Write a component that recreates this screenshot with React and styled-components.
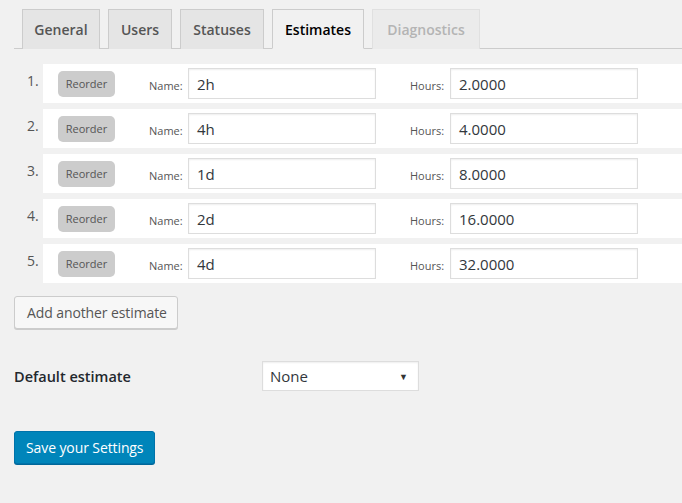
import styled, { createGlobalStyle } from 'styled-components';

const GlobalStyle = createGlobalStyle`
  body {
    margin: 0;
    background: #f1f1f1;
    font-family: "Open Sans", "Noto Sans", sans-serif;
    color: #23282d;
  }
`;

const Page = styled.div`
  padding: 9px 0 40px 14px;
`;

const TabBar = styled.div`
  display: flex;
  gap: 8px;
  padding-left: 8px;
  border-bottom: 1px solid #ccc;
`;

const Tab = styled.div`
  box-sizing: border-box;
  height: 40px;
  width: ${({ w }) => w}px;
  margin-bottom: -1px;
  display: flex;
  align-items: center;
  justify-content: center;
  font-size: 14px;
  font-weight: 600;
  border: 1px solid #ccc;
  border-bottom: none;
  background: ${({ active }) => (active ? '#f1f1f1' : '#e5e5e5')};
  color: ${({ active, disabled }) => (active ? '#000' : disabled ? '#b4b4b4' : '#555')};
  ${({ active }) => active && 'border-bottom: 1px solid #f1f1f1;'}
  ${({ disabled }) => disabled && 'background: #ebebeb; border-color: #e0e0e0;'}
`;

const List = styled.div`
  margin-top: 15px;
  display: flex;
  flex-direction: column;
  gap: 6px;
`;

const Item = styled.div`
  display: flex;
`;

const Num = styled.div`
  width: 16px;
  padding-left: 13px;
  font-size: 14px;
  color: #555;
  line-height: 38px;
  margin-top: -2px;
`;

const Card = styled.div`
  flex: 1;
  height: 39px;
  background: #fff;
  display: flex;
  align-items: center;
  padding-left: 15px;
`;

const Reorder = styled.span`
  box-sizing: border-box;
  width: 57px;
  height: 26px;
  background: #ccc;
  border-radius: 5px;
  font-size: 11px;
  color: #555;
  display: flex;
  align-items: center;
  justify-content: center;
`;

const FieldLabel = styled.span`
  font-size: 11px;
  color: #555;
  margin-left: 34px;
  width: ${({ wide }) => (wide ? 40 : 39)}px;
  padding-top: 3px;
`;

const TextBox = styled.div`
  box-sizing: border-box;
  width: 188px;
  height: 31px;
  border: 1px solid #ddd;
  box-shadow: inset 0 1px 2px rgba(0, 0, 0, 0.07);
  background: #fff;
  font-size: 15px;
  color: #32373c;
  padding-left: 8px;
  display: flex;
  align-items: center;
`;

const SecondaryButton = styled.div`
  box-sizing: border-box;
  display: inline-flex;
  align-items: center;
  margin-top: 13px;
  height: 33px;
  padding: 0 10px 0 12px;
  font-size: 14px;
  letter-spacing: -0.1px;
  color: #555;
  background: #f7f7f7;
  border: 1px solid #ccc;
  border-radius: 3px;
  box-shadow: 0 1px 0 #ccc;
`;

const FormRow = styled.div`
  display: flex;
  align-items: center;
  margin-top: 32px;
`;

const FormLabel = styled.div`
  width: 248px;
  font-size: 14.5px;
  font-weight: 600;
  color: #23282d;
`;

const Select = styled.div`
  box-sizing: border-box;
  width: 157px;
  height: 30px;
  border: 1px solid #ddd;
  box-shadow: inset 0 1px 2px rgba(0, 0, 0, 0.07);
  background: #fff;
  display: flex;
  align-items: center;
  justify-content: space-between;
  padding: 0 10px 0 7px;
  font-size: 15px;
  color: #32373c;
`;

const Arrow = styled.span`
  font-size: 9px;
  color: #333;
`;

const PrimaryButton = styled.div`
  box-sizing: border-box;
  display: inline-flex;
  align-items: center;
  margin-top: 40px;
  height: 33px;
  padding: 0 11px;
  font-size: 14px;
  letter-spacing: -0.1px;
  color: #fff;
  background: #0085ba;
  border: 1px solid #0073aa;
  border-radius: 3px;
  box-shadow: 0 1px 0 #006799;
`;

const tabs = [
  { label: 'General', w: 78 },
  { label: 'Users', w: 64 },
  { label: 'Statuses', w: 84 },
  { label: 'Estimates', w: 92, active: true },
  { label: 'Diagnostics', w: 108, disabled: true },
];

const estimates = [
  ['2h', '2.0000'],
  ['4h', '4.0000'],
  ['1d', '8.0000'],
  ['2d', '16.0000'],
  ['4d', '32.0000'],
];

export default function App() {
  return (
    <Page>
      <GlobalStyle />
      <TabBar>
        {tabs.map((t) => (
          <Tab key={t.label} w={t.w} active={t.active} disabled={t.disabled}>
            {t.label}
          </Tab>
        ))}
      </TabBar>
      <List>
        {estimates.map(([name, hours], i) => (
          <Item key={name}>
            <Num>{i + 1}.</Num>
            <Card>
              <Reorder>Reorder</Reorder>
              <FieldLabel>Name:</FieldLabel>
              <TextBox>{name}</TextBox>
              <FieldLabel wide>Hours:</FieldLabel>
              <TextBox>{hours}</TextBox>
            </Card>
          </Item>
        ))}
      </List>
      <SecondaryButton>Add another estimate</SecondaryButton>
      <FormRow>
        <FormLabel>Default estimate</FormLabel>
        <Select>
          None
          <Arrow>▼</Arrow>
        </Select>
      </FormRow>
      <PrimaryButton>Save your Settings</PrimaryButton>
    </Page>
  );
}
